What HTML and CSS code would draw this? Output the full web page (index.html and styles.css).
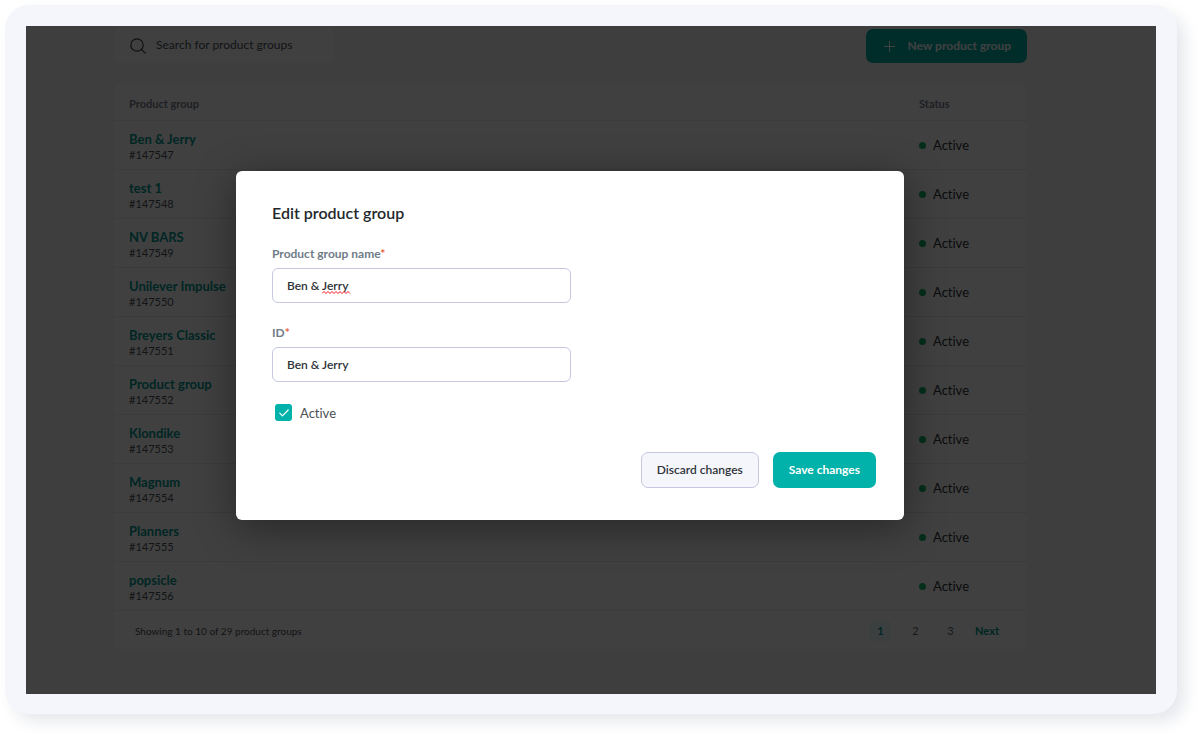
FILE: index.html
```html
<!DOCTYPE html>
<html lang="en">
<head>
  <meta charset="UTF-8">
  <meta name="viewport" content="width=device-width, initial-scale=1.0">
  <title>Product groups</title>
  <link rel="stylesheet" href="styles.css">
</head>
<body>
  <div class="frame">
    <div class="screen">
      <main class="page">
        <div class="toolbar">
          <label class="search">
            <svg width="16" height="16" viewBox="0 0 16 16" fill="none" stroke="#3c4248" stroke-width="1.2" stroke-linecap="round" aria-hidden="true">
              <circle cx="7" cy="7" r="6.2"/>
              <path d="M11.5 11.5L15.2 15.2"/>
            </svg>
            <input type="text" placeholder="Search for product groups" aria-label="Search for product groups">
          </label>
          <button type="button" class="btn btn-new">
            <svg width="11" height="11" viewBox="0 0 11 11" stroke="#fff" stroke-width="1" aria-hidden="true">
              <path d="M5.5 0V11M0 5.5H11"/>
            </svg>
            New product group
          </button>
        </div>

        <div class="card">
          <table class="groups">
            <thead>
              <tr><th>Product group</th><th class="col-status">Status</th></tr>
            </thead>
            <tbody>
              <tr><td><a href="#">Ben &amp; Jerry</a><small>#147547</small></td><td><span class="status">Active</span></td></tr>
              <tr><td><a href="#">test 1</a><small>#147548</small></td><td><span class="status">Active</span></td></tr>
              <tr><td><a href="#">NV BARS</a><small>#147549</small></td><td><span class="status">Active</span></td></tr>
              <tr><td><a href="#">Unilever Impulse</a><small>#147550</small></td><td><span class="status">Active</span></td></tr>
              <tr><td><a href="#">Breyers Classic</a><small>#147551</small></td><td><span class="status">Active</span></td></tr>
              <tr><td><a href="#">Product group</a><small>#147552</small></td><td><span class="status">Active</span></td></tr>
              <tr><td><a href="#">Klondike</a><small>#147553</small></td><td><span class="status">Active</span></td></tr>
              <tr><td><a href="#">Magnum</a><small>#147554</small></td><td><span class="status">Active</span></td></tr>
              <tr><td><a href="#">Planners</a><small>#147555</small></td><td><span class="status">Active</span></td></tr>
              <tr><td><a href="#">popsicle</a><small>#147556</small></td><td><span class="status">Active</span></td></tr>
            </tbody>
          </table>
          <div class="card-footer">
            <span>Showing 1 to 10 of 29 product groups</span>
            <nav class="pages">
              <a href="#" class="current">1</a>
              <a href="#">2</a>
              <a href="#">3</a>
              <a href="#" class="next">Next</a>
            </nav>
          </div>
        </div>
      </main>

      <div class="overlay">
        <form class="modal" role="dialog" aria-labelledby="modal-title">
          <h2 id="modal-title">Edit product group</h2>
          <div class="field">
            <label for="group-name">Product group name<span class="required">*</span></label>
            <div class="input-wrap">
              <input type="text" id="group-name" value="Ben &amp; Jerry">
              <svg class="squiggle" width="29" height="3" viewBox="0 0 29 3" fill="none" stroke="#f0141e" stroke-width="1" aria-hidden="true">
                <path d="M0 2.5L2 .5L4 2.5L6 .5L8 2.5L10 .5L12 2.5L14 .5L16 2.5L18 .5L20 2.5L22 .5L24 2.5L26 .5L28 2.5"/>
              </svg>
            </div>
          </div>
          <div class="field">
            <label for="group-id">ID<span class="required">*</span></label>
            <input type="text" id="group-id" value="Ben &amp; Jerry">
          </div>
          <label class="check">
            <span class="check-box">
              <input type="checkbox" checked>
              <svg width="10" height="8" viewBox="0 0 10 8" fill="none" stroke="#fff" stroke-width="1.2" stroke-linecap="round" stroke-linejoin="round" aria-hidden="true">
                <path d="M.8 4.2L3.4 6.8L9.2 1"/>
              </svg>
            </span>
            Active
          </label>
          <div class="actions">
            <button type="button" class="btn btn-discard">Discard changes</button>
            <button type="submit" class="btn btn-save">Save changes</button>
          </div>
        </form>
      </div>
    </div>
  </div>
</body>
</html>
```
FILE: styles.css
```css
* {
  box-sizing: border-box;
}
body {
  margin: 0;
  background: #fff;
  font-family: Lato, "Liberation Sans", sans-serif;
  font-size: 13px;
  line-height: 16px;
  font-variant-ligatures: none;
  color: #2e3338;
}
a {
  text-decoration: none;
}
button,
input {
  font: inherit;
  font-size: 12px;
  color: inherit;
}
.frame {
  margin: 5px 25px 25px 5px;
  padding: 21px 21px 20px;
  border-radius: 24px;
  background: #f5f6fc;
  box-shadow: 8px 8px 16px #e6e8ec;
}
.screen {
  position: relative;
  background: #f5f8fa;
}
.page {
  padding: 3px 129px 45px 88px;
}

/* toolbar */
.toolbar {
  display: flex;
  justify-content: space-between;
  margin-bottom: 21px;
}
.search {
  display: flex;
  align-items: center;
  gap: 10px;
  width: 220px;
  height: 34px;
  padding: 0 16px;
  border-radius: 6px;
  background: #fff;
}
.search svg {
  flex: none;
}
.search input {
  width: 100%;
  padding: 0 0 2px;
  border: 0;
  outline: 0;
  background: none;
}
.search input::placeholder {
  color: #4a525a;
  opacity: 1;
}
.btn {
  height: 36px;
  padding: 0 15px;
  border: 1px solid transparent;
  border-radius: 7px;
  cursor: pointer;
}
.btn-new {
  display: flex;
  align-items: center;
  gap: 12px;
  height: 34px;
  padding-left: 17px;
  background: #00b2a9;
  color: #fff;
  font-weight: 700;
}

/* table */
.card {
  border-radius: 6px;
  background: #fff;
}
.groups {
  width: 100%;
  border-collapse: separate;
  border-spacing: 0;
}
.groups th,
.groups td {
  padding: 0 0 0 15px;
  border-bottom: 1px solid #e6e9f0;
  text-align: left;
}
.groups th {
  height: 37px;
  padding-top: 3px;
  font-size: 11px;
  color: #78828c;
}
.groups td {
  height: 49px;
}
.groups td:first-child {
  padding-top: 3px;
}
.groups .col-status {
  width: 123px;
}
.groups a {
  display: block;
  color: #00998f;
  font-weight: 700;
}
.groups small {
  display: block;
  font-size: 11px;
  color: #4a525a;
}
.status {
  display: flex;
  align-items: center;
  gap: 7px;
}
.status::before {
  content: "";
  width: 7px;
  height: 7px;
  border-radius: 50%;
  background: #12b76a;
}
.card-footer {
  display: flex;
  justify-content: space-between;
  align-items: center;
  height: 38px;
  padding: 2px 28px 0 21px;
  font-size: 10px;
  color: #4a525a;
}
.pages {
  display: flex;
  align-items: center;
  gap: 14px;
  font-size: 11px;
}
.pages a {
  width: 21px;
  border-radius: 3px;
  line-height: 20px;
  text-align: center;
  color: #5c666e;
}
.pages .current {
  background: #f0faf9;
  color: #00998f;
  font-weight: 700;
}
.pages .next {
  width: auto;
  color: #00998f;
  font-weight: 700;
}

/* modal */
.overlay {
  position: absolute;
  inset: 0;
  display: flex;
  justify-content: center;
  align-items: flex-start;
  padding: 145px 42px 0 0;
  background: rgba(0, 0, 0, 0.75);
}
.modal {
  width: 668px;
  padding: 32px 28px 32px 36px;
  border-radius: 6px;
  background: #fff;
  box-shadow: 0 8px 40px rgba(0, 0, 0, 0.4);
}
.modal h2 {
  margin: 0 0 23px;
  font-size: 16px;
  line-height: 20px;
  font-weight: 600;
  color: #24282c;
}
.field {
  width: 299px;
  margin-bottom: 22px;
}
.field label {
  display: block;
  margin-bottom: 6px;
  font-size: 12px;
  font-weight: 700;
  color: #6f7c88;
}
.required {
  color: #e8603c;
}
.field input {
  display: block;
  width: 100%;
  height: 35px;
  padding: 0 14px;
  border: 1px solid #c5c8e0;
  border-radius: 6px;
  outline: 0;
  background: #fff;
  font-weight: 600;
}
.input-wrap {
  position: relative;
}
.squiggle {
  position: absolute;
  left: 50px;
  top: 23px;
}
.check {
  display: flex;
  align-items: center;
  gap: 8px;
  width: max-content;
  padding-left: 3px;
  color: #4a5056;
}
.check-box {
  display: grid;
  place-items: center;
}
.check-box input,
.check-box svg {
  grid-area: 1 / 1;
}
.check-box input {
  appearance: none;
  width: 17px;
  height: 17px;
  margin: 0;
  border-radius: 3px;
  background: #00b2a9;
}
.check-box svg {
  z-index: 1;
  pointer-events: none;
}
.actions {
  display: flex;
  justify-content: flex-end;
  gap: 14px;
  margin-top: 31px;
}
.btn-discard {
  border-color: #c5c8e0;
  background: #f5f6fc;
  font-weight: 600;
}
.btn-save {
  background: #00b2a9;
  color: #fff;
  font-weight: 700;
}
```
